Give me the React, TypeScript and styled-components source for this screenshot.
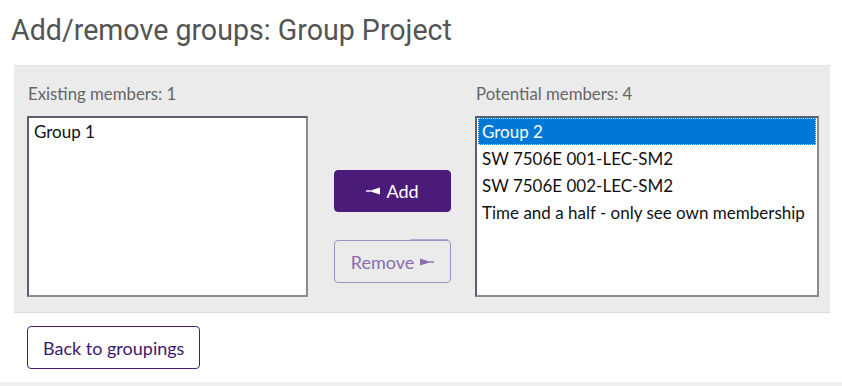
import React from "react";
import styled, { createGlobalStyle } from "styled-components";

const Global = createGlobalStyle`
  html, body { margin: 0; padding: 0; background: #fff; }
  body { font-family: "Lato", "Liberation Sans", sans-serif; }
`;

const Page = styled.div`
  width: 842px;
  height: 386px;
  position: relative;
  box-sizing: border-box;
  padding: 0 12px 0 14px;
  display: flex;
  flex-direction: column;
`;

const Title = styled.h2`
  font-family: "Roboto", "Liberation Sans", sans-serif;
  font-weight: 400;
  font-size: 28.6px;
  line-height: 32px;
  color: #545454;
  margin: 14px 0 19px -3px;
`;

const Panel = styled.div`
  background: #ebebeb;
  border-top: 1px solid #e3e3e3;
  border-bottom: 1px solid #dcdcdc;
  display: grid;
  grid-template-columns: 281px 118px 343px;
  column-gap: 25px;
  padding: 17px 11px 15px 13px;
`;

const Column = styled.div<{ $shift?: number }>`
  display: flex;
  flex-direction: column;
  margin-left: ${(p) => p.$shift ?? 0}px;
`;

const Label = styled.div`
  font-size: 16.8px;
  line-height: 22px;
  color: #666;
  margin-bottom: 11px;
  padding-left: 1px;
`;

const ListBox = styled.div`
  height: 181px;
  box-sizing: border-box;
  background: #fff;
  border: 2px solid;
  border-color: #5f5e6e #8b8a98 #8b8a98 #5f5e6e;
  padding: 0 1px;
`;

const Option = styled.div<{ $selected?: boolean }>`
  font-size: 17px;
  line-height: 21px;
  padding: 3px 4px;
  color: ${(p) => (p.$selected ? "#fff" : "#111")};
  background: ${(p) => (p.$selected ? "#0078d7" : "transparent")};
  outline: ${(p) => (p.$selected ? "1px dotted #cfe3f5" : "none")};
  outline-offset: -1px;
  white-space: nowrap;
`;

const Buttons = styled.div`
  display: flex;
  flex-direction: column;
  padding-top: 87px;
  gap: 28px;
  margin-left: 1px;
`;

const Button = styled.button<{ $variant: "primary" | "disabled" | "outline" }>`
  font-family: "Lato", "Liberation Sans", sans-serif;
  font-size: 18px;
  box-sizing: border-box;
  border-radius: 4px;
  cursor: pointer;
  display: flex;
  align-items: center;
  justify-content: center;
  gap: 6px;
  position: relative;
  ${(p) =>
    p.$variant === "primary"
      ? `background:#4b1b7a; color:#fff; border:1px solid #4b1b7a; height:42px;`
      : p.$variant === "disabled"
      ? `background:transparent; color:#8a6cae; border:1px solid #a48ec4; height:43px;`
      : `background:#fff; color:#3c1a6c; border:1px solid #4b1b7a; height:43px; padding:0 15px;`}
`;

const Glitch = styled.span`
  position: absolute;
  top: -2px;
  right: 2px;
  width: 38px;
  height: 1px;
  background: #b8a8d2;
`;

const Footer = styled.div`
  padding: 13px 0 0 13px;
`;

const BottomStrip = styled.div`
  position: absolute;
  left: 0;
  right: 0;
  bottom: 0;
  height: 4px;
  background: #f0f0f3;
`;

const ArrowRight = () => (
  <svg width="14" height="8" viewBox="0 0 14 8" aria-hidden>
    <polygon points="0,0.5 8,3 8,5 0,7.5" fill="currentColor" />
    <rect x="7" y="3.3" width="7" height="1.4" fill="currentColor" />
  </svg>
);

const LeftArrow = () => (
  <svg width="14" height="8" viewBox="0 0 14 8" aria-hidden>
    <rect x="0" y="3.3" width="7" height="1.4" fill="currentColor" />
    <polygon points="14,0.5 6,3 6,5 14,7.5" fill="currentColor" />
  </svg>
);

export default function App() {
  return (
    <>
      <Global />
      <Page>
        <Title>Add/remove groups: Group Project</Title>
        <Panel>
          <Column>
            <Label>Existing members: 1</Label>
            <ListBox>
              <Option>Group 1</Option>
            </ListBox>
          </Column>
          <Buttons>
            <Button $variant="primary">
              <LeftArrow /> Add
            </Button>
            <Button $variant="disabled">
              <Glitch />
              Remove <ArrowRight />
            </Button>
          </Buttons>
          <Column $shift={-1}>
            <Label>Potential members: 4</Label>
            <ListBox>
              <Option $selected>Group 2</Option>
              <Option>SW 7506E 001-LEC-SM2</Option>
              <Option>SW 7506E 002-LEC-SM2</Option>
              <Option>Time and a half - only see own membership</Option>
            </ListBox>
          </Column>
        </Panel>
        <Footer>
          <Button $variant="outline">Back to groupings</Button>
        </Footer>
        <BottomStrip />
      </Page>
    </>
  );
}
